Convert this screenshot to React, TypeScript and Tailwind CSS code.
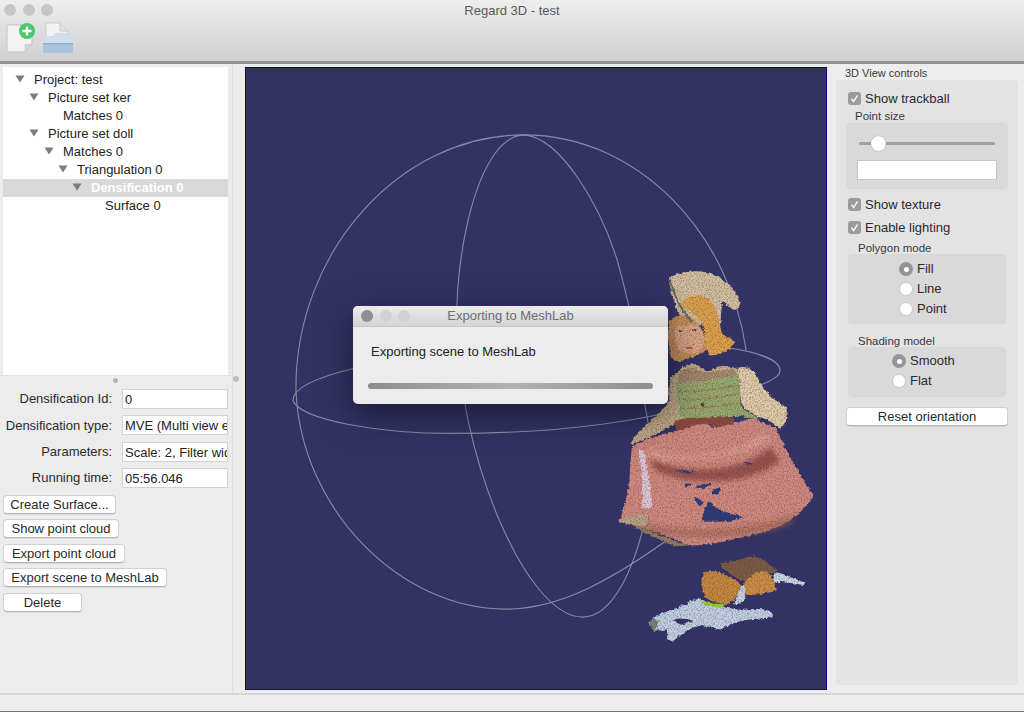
import React from "react"

const FONT = "font-['Liberation_Sans',Arial,sans-serif]"

const treeRows = [
  { label: "Project: test", x: 34, open: true },
  { label: "Picture set ker", x: 48, open: true },
  { label: "Matches 0", x: 63, open: false },
  { label: "Picture set doll", x: 48, open: true },
  { label: "Matches 0", x: 63, open: true },
  { label: "Triangulation 0", x: 77, open: true },
  { label: "Densification 0", x: 91, open: true, selected: true },
  { label: "Surface 0", x: 105, open: false },
]

const fields = [
  ["Densification Id:", "0"],
  ["Densification type:", "MVE (Multi view e"],
  ["Parameters:", "Scale: 2, Filter wid"],
  ["Running time:", "05:56.046"],
]

function TreeRow({ label, x, open, selected }: { label: string; x: number; open: boolean; selected?: boolean }) {
  return (
    <div
      className={`relative h-[18px] leading-[18px] whitespace-nowrap ${selected ? "bg-[#d9d9d9] font-bold text-white" : "text-[#222]"}`}
      style={{ paddingLeft: x - 3 }}
    >
      {open && (
        <svg className="absolute top-[4px]" style={{ left: x - 22 }} width="10" height="8" viewBox="0 0 10 8">
          <path d="M0.5 0.5h9L5 7.5z" fill="#7d7d7d" />
        </svg>
      )}
      {label}
    </div>
  )
}

function Button({ children, className }: { children: React.ReactNode; className: string }) {
  return (
    <div className={`h-[19px] rounded-[4px] border border-[#d0d0d0] border-b-[#b4b4b4] bg-white text-center leading-[17px] text-[#2a2a2a] shadow-[0_1px_0_rgba(0,0,0,0.08)] ${className}`}>
      {children}
    </div>
  )
}

function Check({ label, className }: { label: string; className: string }) {
  return (
    <div className={`flex h-[16px] items-center ${className}`}>
      <div className="flex h-[13px] w-[13px] items-center justify-center rounded-[3px] bg-[#9b9b9f]">
        <svg width="11" height="11" viewBox="0 0 11 11" fill="none">
          <path d="M2.5 5.8l2.2 2.6 3.9-6" stroke="#f4f4f4" strokeWidth="1.5" />
        </svg>
      </div>
      <span className="ml-[4px] pt-[2px] text-[#2a2a2a]">{label}</span>
    </div>
  )
}

function Radio({ label, checked }: { label: string; checked?: boolean }) {
  return (
    <div className="flex h-[20px] items-center">
      <div className={`flex h-[14px] w-[14px] shrink-0 items-center justify-center rounded-full ${checked ? "bg-[#949498]" : "border border-[#c8c8c8] bg-white"}`}>
        {checked && <div className="h-[5px] w-[5px] rounded-full bg-white" />}
      </div>
      <span className="ml-[4px] text-[#2a2a2a]">{label}</span>
    </div>
  )
}

function Lights({ first, rest }: { first: string; rest: string }) {
  return (
    <div className="flex gap-[6.500px]">
      <div className={`h-[12px] w-[12px] rounded-full ${first}`} />
      <div className={`h-[12px] w-[12px] rounded-full ${rest}`} />
      <div className={`h-[12px] w-[12px] rounded-full ${rest}`} />
    </div>
  )
}

function NewDocIcon() {
  return (
    <svg width="30" height="32" viewBox="0 0 30 32">
      <path d="M1 3h18l7 8v11l-7 8H1z" fill="#f3f3f3" stroke="#c4c4c4" />
      <path d="M26 22l-7 0.500-0 7.500z" fill="#d6d6d6" stroke="#c4c4c4" strokeWidth="0.6" />
      <circle cx="21" cy="9" r="8" fill="#4cc769" />
      <path d="M21 4.500v9M16.500 9h9" stroke="#fff" strokeWidth="2.4" />
    </svg>
  )
}

function FolderIcon() {
  return (
    <svg width="32" height="32" viewBox="0 0 32 32">
      <path d="M4 1h14l8 8v14H4z" fill="#f2f2f2" stroke="#c9c9c9" />
      <path d="M18 1v8h8" fill="#e2e2e2" stroke="#c9c9c9" />
      <path d="M1 14h10l3-3h17v19q0 1-1 1H2q-1 0-1-1z" fill="#a9c4dc" />
      <path d="M1 14h10l3-3h17v10H1z" fill="#d0dfeb" />
      <path d="M1 21h30v1.500H1z" fill="#8fb0cc" />
    </svg>
  )
}

// trackball + the reconstructed doll, in page coordinates
function Scene() {
  return (
    <svg className="block h-full w-full" viewBox="245 67 581 622">
      <defs>
        <filter id="cloud" x="-8%" y="-8%" width="116%" height="116%" colorInterpolationFilters="sRGB">
          <feGaussianBlur in="SourceGraphic" stdDeviation="1.200" result="smooth" />
          <feTurbulence type="fractalNoise" baseFrequency="0.09" numOctaves="3" seed="4" result="edge" />
          <feDisplacementMap in="smooth" in2="edge" scale="12" xChannelSelector="R" yChannelSelector="G" result="rough" />
          <feTurbulence type="fractalNoise" baseFrequency="0.22" numOctaves="2" seed="9" result="grain" />
          <feColorMatrix in="grain" type="matrix" values="0 0 0 0 0.3  0 0 0 0 0.16  0 0 0 0 0.12  1 0 0 0 -0.42" result="dark" />
          <feComposite in="dark" in2="rough" operator="in" result="speck" />
          <feMerge>
            <feMergeNode in="rough" />
            <feMergeNode in="speck" />
          </feMerge>
        </filter>
        <filter id="soft" x="-20%" y="-60%" width="140%" height="220%">
          <feGaussianBlur stdDeviation="8" />
        </filter>
      </defs>

      <g fill="none" stroke="#8b8ba6" strokeWidth="1.1">
        <path d="M295 390C294 250 400 134 523 134C640 134 730 235 746 350" />
        <path d="M295 390C300 510 400 609 505 609C555 609 610 585 700 515" />
        <path d="M523 134C480 136 456 240 456 320C456 450 525 617 582 617C612 617 635 570 648 505C654 470 650 430 645 407C640 365 635 325 617 260C600 205 560 136 523 134" />
        <path d="M353 368C315 377 292 388 292 400C300 420 380 433 452 433C560 433 660 420 730 394C765 384 780 378 780 370C780 360 760 352 727 347" />
      </g>

      <g transform="translate(610 260) scale(0.3333)" filter="url(#cloud)">
        {/* left arm and shoulders */}
        <path d="M182 350C205 335 225 310 245 308C270 320 290 335 305 330C330 305 355 320 375 322L400 340L300 480L200 485C160 510 110 540 60 552C75 525 95 505 110 490C140 465 170 440 178 420C175 395 178 370 182 350z" fill="#c2ad8c" />
        <path d="M205 340C225 320 245 315 265 328C290 345 330 325 370 328L385 345L205 370z" fill="#a48a70" />
        <path d="M385 322C405 315 430 325 440 345C455 385 490 420 528 440C535 465 525 495 510 505C490 490 470 470 440 470C415 450 395 440 392 420z" fill="#dfcdab" />
        {/* vest */}
        <path d="M200 368C260 365 330 355 385 342C392 375 388 410 392 440C410 455 430 462 445 476C390 470 340 468 300 470C265 475 235 475 210 470C210 435 195 400 200 368z" fill="#95ab70" />
        <path d="M200 393C260 395 330 385 388 372M203 416C270 420 330 410 390 400M212 444C270 445 340 435 392 428" stroke="#a5804f" strokeWidth="4" fill="none" />
        <path d="M190 483C220 470 260 472 290 472C320 470 350 462 380 478C365 495 345 505 325 503C310 498 300 488 285 490C260 495 230 510 205 510C195 505 190 495 190 483z" fill="#8c4a42" />
        <circle cx="277" cy="434" r="6" fill="#5f3f22" />
        {/* skirt */}
        <path d="M65 558C110 535 170 515 205 510C240 498 270 488 290 490C310 505 340 505 380 485C400 478 420 472 440 476C460 490 480 495 497 503C520 555 545 600 570 640C585 670 600 690 612 706C590 740 565 765 535 782C500 805 465 815 430 822C370 840 300 855 240 856C190 835 140 815 100 805C75 795 50 790 28 782C40 745 48 715 55 680C60 640 60 600 65 558z" fill="#cf8a81" />
        <path d="M120 590C190 640 380 650 480 560L510 600C420 680 220 680 130 625z" fill="#8d4a48" opacity="0.85" filter="url(#soft)" />
        <path d="M105 565C190 600 370 600 465 515L480 535C400 590 200 615 110 585z" fill="#e0a295" filter="url(#soft)" />
        <path d="M50 770C150 810 350 830 560 760L540 795C400 845 150 845 60 790z" fill="#96604f" opacity="0.55" filter="url(#soft)" />
        <path d="M28 782C50 770 85 760 112 762L108 795C85 800 55 795 28 782z" fill="#b7a58b" />
        <path d="M82 568C92 565 100 570 105 590C112 640 125 690 125 735C118 745 105 745 95 742C100 690 95 620 82 568z" fill="#ddc8dc" />
        <path d="M60 790C130 815 190 845 240 855L195 858C150 840 100 820 60 790z" fill="#8f7c62" />
        {/* head */}
        <path d="M175 55C190 40 240 25 290 35C340 45 380 90 390 130C385 150 370 155 355 135L335 125L330 200L240 190L205 160C190 120 180 85 175 55z" fill="#d2c1a4" />
        <path d="M178 180C195 165 215 160 240 170C275 190 290 230 292 270C270 280 240 295 205 303C185 300 175 285 178 260C170 230 175 200 178 180z" fill="#c9925f" />
        <path d="M195 200C215 190 260 185 272 205C288 235 285 260 262 275C240 282 220 280 205 268C195 245 190 220 195 200z" fill="#dba98a" />
        <path d="M212 135C225 105 265 95 295 115C325 140 325 190 335 215C350 235 370 235 375 242C365 262 345 282 300 282C285 270 285 235 280 205C270 170 240 150 212 135z" fill="#dca34f" />
        <path d="M178 58C190 95 205 140 245 185" stroke="#66705e" strokeWidth="6" fill="none" />
        <path d="M207 212h12M246 208h12" stroke="#4f4a46" strokeWidth="5" />
        <path d="M228 262h18" stroke="#b5564a" strokeWidth="6" />
        {/* gaps in the cloud */}
        <g fill="#2b3b7c">
          <path d="M272 782C280 760 285 735 298 724C315 745 350 760 402 770C380 780 320 790 272 782z" />
          <path d="M252 682C270 672 290 668 305 668C300 680 275 686 252 682z" />
          <path d="M305 692C315 684 325 680 332 684C330 700 320 708 305 702z" />
          <path d="M250 710C262 712 278 722 282 730L262 736z" />
          <path d="M192 628C215 628 235 632 252 636L240 640C222 638 205 634 192 628z" />
          <path d="M225 670h16v8h-16z" />
          <path d="M368 476C380 470 395 464 406 464L400 482L375 484z" />
          <path d="M402 606h24v6h-24z" />
        </g>
      </g>

      <g transform="translate(630 540) scale(0.3333)" filter="url(#cloud)">
        <path d="M55 248C70 225 110 215 150 200C170 190 190 178 210 175C240 195 290 205 340 210C370 205 400 205 425 215L425 232C370 235 310 240 272 268L215 255C180 265 150 280 128 305L112 300L110 268L72 272C65 265 58 258 55 248z" fill="#c0d2e8" />
        <path d="M130 240C150 232 170 236 190 243L150 255z" fill="#333265" />
        <path d="M55 245C62 235 78 235 88 245L72 272C62 268 58 255 55 245z" fill="#7e7f7c" />
        <path d="M435 95C470 105 500 120 526 128L522 135C490 130 460 125 425 125z" fill="#c9d7e8" />
        <path d="M200 172L220 185L285 195L270 204L225 195z" fill="#9bd14a" />
        <path d="M218 100C240 90 262 92 275 100C300 110 325 120 332 135C330 160 310 185 290 195C265 190 240 185 225 170C215 145 210 120 218 100z" fill="#c48a42" />
        <path d="M268 70C300 65 340 55 372 45C395 55 420 75 442 92C420 105 390 100 365 118C350 130 335 125 322 115C300 100 280 90 268 70z" fill="#7a5d47" />
        <path d="M345 128C360 105 385 92 405 92C425 105 438 125 436 152C410 160 375 165 350 165C340 155 340 140 345 128z" fill="#cc8f45" />
        <path d="M312 192C320 165 332 140 342 128L346 175C335 185 325 195 312 192z" fill="#c6d6ea" />
      </g>
    </svg>
  )
}

export default function App() {
  return (
    <div className={`relative flex h-[712px] w-[1024px] flex-col overflow-hidden bg-[#ededed] text-[13px] ${FONT}`}>
      {/* title bar + toolbar */}
      <div className="h-[64px] shrink-0 border-b-[3px] border-[#929292] bg-gradient-to-b from-[#eeeeee] to-[#cfcfcf]">
        <div className="relative flex h-[22px] items-center justify-center text-[#595959]">
          <div className="absolute left-[4px] top-[4px]">
            <Lights first="bg-[#c6c6c6]" rest="bg-[#c6c6c6]" />
          </div>
          Regard 3D - test
        </div>
        <div className="flex items-start gap-[6px] pl-[6px]">
          <NewDocIcon />
          <FolderIcon />
        </div>
      </div>

      <div className="flex min-h-0 flex-1">
        {/* left column */}
        <div className="relative flex w-[233px] shrink-0 flex-col border-r border-[#dddddd] bg-[#ececec]">
          <div className="ml-[3px] mr-[4px] mt-[3px] h-[308px] bg-white pt-[4px]">
            {treeRows.map((row, i) => (
              <TreeRow key={i} {...row} />
            ))}
          </div>
          <div className="flex h-[14px] justify-center border-t border-[#dfdfdf] pt-[2px] pr-[2px]">
            <div className="h-[5px] w-[5px] rounded-full bg-[#b4b4b4]" />
          </div>
          <div className="grid grid-cols-[112px_106px] items-center gap-x-[10px] gap-y-[6.300px] whitespace-nowrap">
            {fields.map(([label, value]) => (
              <React.Fragment key={label}>
                <div className="text-right text-[#2a2a2a]">{label}</div>
                <div className="h-[20px] overflow-hidden border border-[#d2d2d2] bg-white pl-[2px] leading-[19px] text-[#222]">
                  {value}
                </div>
              </React.Fragment>
            ))}
          </div>
          <div className="ml-[3px] mt-[7px] flex flex-col items-start gap-[5.500px]">
            <Button className="w-[113px]">Create Surface...</Button>
            <Button className="w-[116px]">Show point cloud</Button>
            <Button className="w-[122px]">Export point cloud</Button>
            <Button className="w-[164px]">Export scene to MeshLab</Button>
            <Button className="w-[79px]">Delete</Button>
          </div>
          <div className="absolute right-[-7px] top-[312px] h-[6px] w-[6px] rounded-full bg-[#bdbdbd]" />
        </div>

        {/* 3D view */}
        <div className="ml-[12px] mt-[3px] h-[623px] w-[582px] shrink-0 border border-[#0b0b6b] bg-[#333265]">
          <Scene />
        </div>

        {/* right panel */}
        <div className="ml-[9px] w-[182px] shrink-0">
          <div className="h-[16px] pl-[9px] pt-[3px] text-[11px] leading-[12px] text-[#3a3a3a]">3D View controls</div>
          <div className="h-[605px] rounded-[4px] bg-[#e3e3e3] pt-[10px]">
            <Check label="Show trackball" className="ml-[12px]" />
            <div className="ml-[19px] mt-[2px] h-[15px] text-[11.500px] leading-[17px] text-[#3a3a3a]">Point size</div>
            <div className="mx-[10px] h-[66px] rounded-[4px] bg-[#d9d9d9] px-[11px] pt-[13px]">
              <div className="relative h-[14px]">
                <div className="absolute left-[2px] right-[2px] top-[6px] h-[3px] rounded-full bg-[#9f9f9f]" />
                <div className="absolute left-[14px] top-0 h-[15px] w-[15px] rounded-full bg-white shadow-[0_0_1px_#777]" />
              </div>
              <div className="mt-[10px] h-[20px] border border-[#c4c4c4] bg-white" />
            </div>
            <Check label="Show texture" className="ml-[12px] mt-[7px]" />
            <Check label="Enable lighting" className="ml-[12px] mt-[7px]" />
            <div className="ml-[22px] mt-[6px] h-[13px] text-[11.500px] leading-[15px] text-[#3a3a3a]">Polygon mode</div>
            <div className="mx-[12px] flex h-[70px] flex-col items-start justify-center rounded-[4px] bg-[#d9d9d9] pl-[51px]">
              <Radio label="Fill" checked />
              <Radio label="Line" />
              <Radio label="Point" />
            </div>
            <div className="ml-[22px] mt-[10px] h-[13px] text-[11.500px] leading-[15px] text-[#3a3a3a]">Shading model</div>
            <div className="mx-[12px] flex h-[50px] flex-col items-start justify-center rounded-[4px] bg-[#d9d9d9] pb-[2px] pl-[44px]">
              <Radio label="Smooth" checked />
              <Radio label="Flat" />
            </div>
            <Button className="mx-[10px] mt-[10px] w-[162px]">Reset orientation</Button>
          </div>
        </div>
      </div>

      {/* status bar */}
      <div className="h-[19px] shrink-0 border-b border-t-[2px] border-b-[#777777] border-t-[#d5d5d5] bg-[#eeeeee]" />

      {/* modal progress window */}
      <div className="absolute left-[353px] top-[306px] h-[98px] w-[315px] overflow-hidden rounded-[5px] bg-[#ececec] shadow-[0_10px_35px_rgba(0,0,0,0.5)]">
        <div className="relative flex h-[21px] items-center justify-center border-b border-[#c8c8c8] bg-gradient-to-b from-[#ececec] to-[#d4d4d4] text-[#6e6e6e]">
          <div className="absolute left-[8px] top-[4px]">
            <Lights first="bg-[#8f8f8f]" rest="bg-[#d2d2d2]" />
          </div>
          Exporting to MeshLab
        </div>
        <div className="pl-[18px] pt-[15px] text-[#222]">Exporting scene to MeshLab</div>
        <div className="mx-[15px] mt-[21px] h-[6px] rounded-full bg-gradient-to-r from-[#8e8e8e] via-[#b2b2b2] to-[#8e8e8e]" />
      </div>
    </div>
  )
}
